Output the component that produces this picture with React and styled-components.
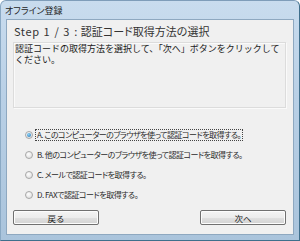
import React, { useState } from 'react';
import styled, { createGlobalStyle } from 'styled-components';

const Global = createGlobalStyle`
  html, body { margin: 0; padding: 0; background: #fff; }
  body { font-family: 'Noto Sans CJK JP', 'Noto Sans', sans-serif; }
`;

const Window = styled.div`
  width: 300px;
  height: 241px;
  box-sizing: border-box;
  display: flex;
  flex-direction: column;
  background: linear-gradient(180deg, #c9dcee 0%, #b9d0e6 40%, #aac4dc 100%);
  border: 1px solid #3f6f8c;
  border-top-color: #7f9db9;
  border-left-color: #8aa9c4;
  border-radius: 6px 6px 0 0;
  overflow: hidden;
`;

const TitleBar = styled.div`
  height: 18px;
  display: flex;
  align-items: center;
  padding-left: 4px;
  font-size: 9px;
  color: #1e1e1e;
  font-feature-settings: 'palt';
`;

const Client = styled.div`
  flex: 1;
  margin: 0 5px 5px 5px;
  background: #f0f0f0;
  border: 1px solid #8ea8c0;
  display: flex;
  flex-direction: column;
  padding: 0 7px 0 6px;
`;

const Heading = styled.div`
  height: 22px;
  display: flex;
  align-items: center;
  font-size: 11px;
  color: #333;
  padding-left: 1px;
  white-space: nowrap;
  font-feature-settings: 'palt';
`;

const StepLabel = styled.span`
  letter-spacing: 0.6px;
  word-spacing: 1px;
  margin-right: 3px;
`;

const InfoBox = styled.div`
  height: 66px;
  box-sizing: border-box;
  border: 1px solid #dcdcdc;
  box-shadow: inset 1px 1px 0 #fafafa, 1px 1px 0 #fafafa;
  padding: 0 1px;
  font-size: 9px;
  line-height: 11px;
  color: #1a1a1a;
  white-space: nowrap;
  overflow: hidden;
`;

const Options = styled.div`
  display: flex;
  flex-direction: column;
  margin-top: 17px;
  padding-left: 12px;
`;

const OptionRow = styled.label`
  height: 20px;
  display: flex;
  align-items: center;
  gap: 3px;
  font-size: 8px;
  color: #2a2a2a;
  white-space: nowrap;
  font-feature-settings: 'palt';
  letter-spacing: -0.5px;
`;

const Radio = styled.span`
  width: 8px;
  height: 8px;
  box-sizing: border-box;
  border-radius: 50%;
  border: 1px solid #a8a8a8;
  background: radial-gradient(circle at 40% 35%, #fdfdfd 0%, #e4e4e4 70%, #d0d0d0 100%);
  display: flex;
  align-items: center;
  justify-content: center;
  flex-shrink: 0;

  &::after {
    content: '';
    width: 4px;
    height: 4px;
    border-radius: 50%;
    background: ${p => (p.$checked ? 'radial-gradient(circle at 40% 35%, #8fd3f5, #1c6fb3)' : 'transparent')};
  }
`;

const OptionText = styled.span`
  padding: 0 1px;
  outline: ${p => (p.$focus ? '1px dotted #444' : 'none')};
  outline-offset: 0;
  line-height: 10px;
`;

const ButtonRow = styled.div`
  display: flex;
  justify-content: space-between;
  margin-top: 5px;
`;

const Button = styled.button`
  width: 86px;
  height: 15px;
  padding: 0;
  border: 1px solid #707070;
  border-radius: 2px;
  background: linear-gradient(180deg, #f4f4f4 0%, #ececec 50%, #e0e0e0 51%, #d3d3d3 100%);
  box-shadow: inset 0 0 0 1px #fcfcfc;
  font-family: inherit;
  font-size: 8.5px;
  color: #1a1a1a;
  display: flex;
  align-items: center;
  justify-content: center;
`;

const options = [
  'A. このコンピューターのブラウザを使って認証コードを取得する。',
  'B. 他のコンピューターのブラウザを使って認証コードを取得する。',
  'C. メールで認証コードを取得する。',
  'D. FAXで認証コードを取得する。',
];

export default function App() {
  const [sel, setSel] = useState(0);
  return (
    <>
      <Global />
      <Window>
        <TitleBar>オフライン登録</TitleBar>
        <Client>
          <Heading>
            <StepLabel>Step 1 / 3 :</StepLabel>認証コード取得方法の選択
          </Heading>
          <InfoBox>
            認証コードの取得方法を選択して、「次へ」ボタンをクリックして
            <br />
            ください。
          </InfoBox>
          <Options>
            {options.map((o, i) => (
              <OptionRow key={o} onClick={() => setSel(i)}>
                <Radio $checked={sel === i} />
                <OptionText $focus={sel === i}>{o}</OptionText>
              </OptionRow>
            ))}
          </Options>
          <ButtonRow>
            <Button>戻る</Button>
            <Button>次へ</Button>
          </ButtonRow>
        </Client>
      </Window>
    </>
  );
}
